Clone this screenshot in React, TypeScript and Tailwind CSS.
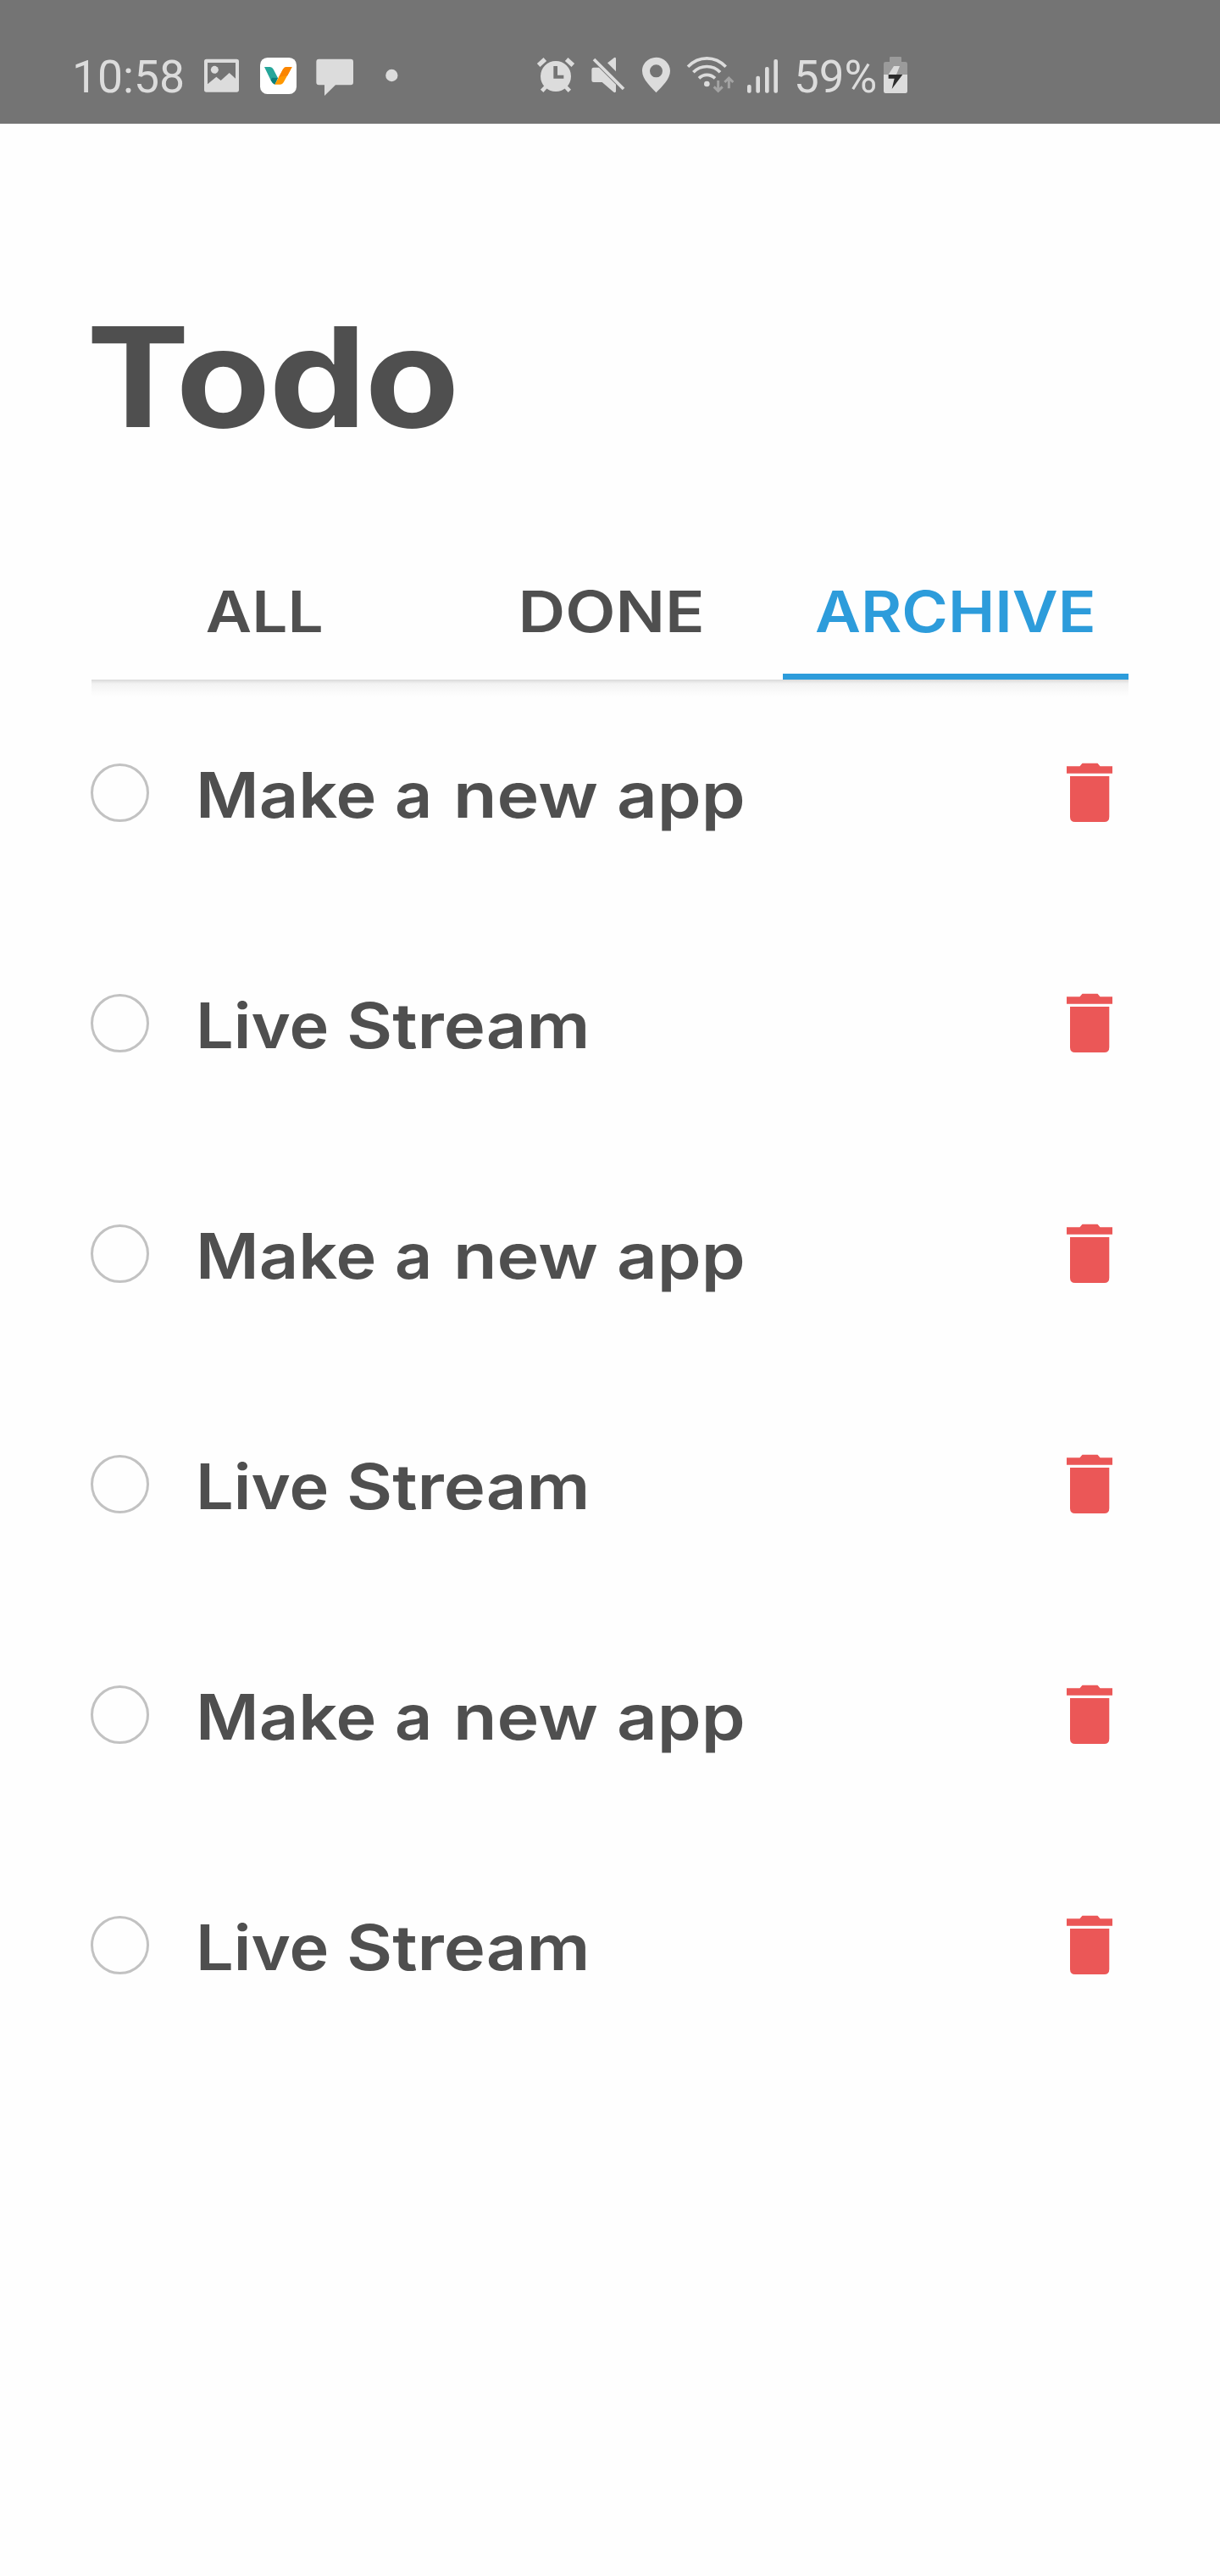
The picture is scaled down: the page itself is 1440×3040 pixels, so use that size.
import type { ReactNode } from 'react'

function Glyph({ box, className, children }: { box: string; className: string; children: ReactNode }) {
  return (
    <svg viewBox={box} className={`h-[50px] shrink-0 ${className}`} fill="#dcdcdc">
      {children}
    </svg>
  )
}

function StatusBar() {
  return (
    <header className="flex h-[146px] items-center bg-[#747474] pt-9 pl-[85px] font-['Roboto',sans-serif] text-[54px] leading-none text-[#dcdcdc]">
      <span className="w-[156px] origin-left scale-x-99">10:58</span>
      <Glyph box="543 78 123 150" className="w-[41px]">
        <path
          fillRule="evenodd"
          d="M551 89H658Q666 89 666 97V198Q666 206 658 206H551Q543 206 543 198V97Q543 89 551 89ZM555 102V178L586 152L602 165L632 138L654 158V102Z"
        />
        <circle cx="580" cy="127" r="13.5" />
      </Glyph>
      <Glyph box="741 78 129 150" className="ml-[25px] w-[43px]">
        <rect x="741" y="84" width="129" height="129" rx="26" fill="#fff" />
        <path d="M756 117H776Q784 117 788 125L804 156L793 179Q784 174 779 164Z" fill="#26a69a" />
        <path d="M783 155L804 156L793 179Q784 174 779 164Z" fill="#0b7f7b" />
        <path d="M854 117H834Q826 117 822 125L793 179H813Q820 179 824 172Z" fill="#ff9800" />
        <path d="M854 117H834Q826 117 822 125L806 155Q826 148 838 148Z" fill="#fb8500" />
      </Glyph>
      <Glyph box="939 78 132 150" className="ml-[23px] w-[44px]">
        <path d="M949 89H1062Q1071 89 1071 98V172Q1071 181 1062 181H1008L969 219V181H949Q940 181 940 172V98Q940 89 949 89Z" />
      </Glyph>
      <Glyph box="1184 78 45 150" className="ml-[38px] w-[15px]">
        <circle cx="1206" cy="147" r="21.5" />
      </Glyph>
      <Glyph box="69 78 138 150" className="ml-[163px] w-[46px]">
        <path fillRule="evenodd" d="M138 96a54 54 0 1 1 0 108a54 54 0 1 1 0-108ZM130 114V158H166V146H144V114Z" />
        <path
          d="M77 111L100 90M176 90L199 111"
          stroke="#dcdcdc"
          strokeWidth="16"
          fill="none"
        />
        <path d="M89 202L104 186M187 202L172 186" stroke="#dcdcdc" strokeWidth="14" fill="none" />
      </Glyph>
      <Glyph box="264 78 120 150" className="ml-[19px] w-[40px]">
        <path d="M273 90L378 195" stroke="#dcdcdc" strokeWidth="11" fill="none" />
        <path d="M321 103L345 84Q351 81 351 88V133Z" />
        <path d="M272 119H291L351 179V203Q350 210 343 206L302 171H272Q265 171 265 164V126Q265 119 272 119Z" />
      </Glyph>
      <Glyph box="444 78 99 150" className="ml-5 w-[33px]">
        <path
          fillRule="evenodd"
          d="M493.500 83C521 83 543 105 543 131C543 160 514 186 493.500 208C473 186 444 160 444 131C444 105 466 83 493.500 83ZM493.500 109a22.500 22.500 0 1 0 0 45a22.500 22.500 0 1 0 0-45Z"
        />
      </Glyph>
      <Glyph box="600 78 171 150" className="ml-[19px] w-[57px]">
        <g fill="none" stroke="#dcdcdc" strokeWidth="11">
          <path d="M606 116Q635 86.500 673 86.500T740 116" />
          <path d="M625 136Q645 115.500 673 115.500T720 136" />
          <path d="M645 157Q657 145 673 145T702 157" />
        </g>
        <circle cx="673" cy="177" r="10" />
        <g fill="none" stroke="#a3a3a3" strokeWidth="9">
          <path d="M713 165V203M698 187L713 202L728 187" />
          <path d="M751 193V156M736 171L751 156L766 171" />
        </g>
      </Glyph>
      <Glyph box="813 78 114 150" className="ml-3.5 w-[38px]">
        <rect x="816" y="180" width="14" height="29" rx="6" />
        <rect x="847" y="149" width="14" height="60" rx="6" />
        <rect x="879" y="117" width="14" height="92" rx="6" />
        <rect x="910" y="90" width="14" height="119" rx="6" />
      </Glyph>
      <span className="ml-[18px] w-[106px] origin-left scale-x-98">59%</span>
      <Glyph box="1299 78 84 150" className="w-7">
        <path d="M1323 81H1359Q1362 81 1362 84V99H1376Q1383 99 1383 106V144H1299V106Q1299 99 1306 99H1320V84Q1320 81 1323 81Z" fill="#9b9b9b" />
        <path d="M1299 144H1383V203Q1383 210 1376 210H1306Q1299 210 1299 203Z" />
        <path d="M1335 114H1356L1344 144H1316Z" />
        <path d="M1316 144H1366L1328 195L1337 158H1316Z" fill="#2c2c2c" />
      </Glyph>
    </header>
  )
}

const tabs = [
  { label: 'ALL', fit: 'scale-x-[1.115]', active: false },
  { label: 'DONE', fit: 'scale-x-[1.151] translate-x-[2px]', active: false },
  { label: 'ARCHIVE', fit: 'scale-x-[1.107]', active: true },
]

function Tabs() {
  return (
    <nav className="h-[162px]">
      <div className="flex h-full text-[67px] leading-none font-semibold">
        {tabs.map((tab) => (
          <button
            key={tab.label}
            className={
              tab.active
                ? 'flex flex-1 items-center justify-center border-b-7 border-[#2d9cdb] pt-[8px] text-[#2d9cdb]'
                : 'flex flex-1 items-center justify-center border-b-7 border-transparent pt-[8px]'
            }
          >
            <span className={tab.fit}>{tab.label}</span>
          </button>
        ))}
      </div>
      <div className="h-5 bg-linear-to-b from-[#d9d9d9] via-[#f3f3f3] via-25% to-[#fefefe]" />
    </nav>
  )
}

const makeApp = [
  { text: 'Make', fit: 'w-[235px] scale-x-[1.095]' },
  { text: 'a', fit: 'w-[69px] scale-x-[1.04]' },
  { text: 'new', fit: 'w-[193px] scale-x-[1.14]' },
  { text: 'app', fit: 'w-[150px] scale-x-[1.125]' },
]

const liveStream = [
  { text: 'Live', fit: 'w-[178px] scale-x-[1.07]' },
  { text: 'Stream', fit: 'w-[290px] scale-x-[1.125]' },
]

const todos = [makeApp, liveStream, makeApp, liveStream, makeApp, liveStream]

function TodoRow({ words }: { words: typeof makeApp }) {
  return (
    <li className="flex h-[272px] items-center">
      <span className="size-[69px] shrink-0 rounded-full border-3 border-[#c2c2c2]" />
      <p className="ml-[55px] flex grow pt-[6px] text-[74px] leading-none font-semibold whitespace-nowrap">
        {words.map((word) => (
          <span key={word.text} className={`origin-left ${word.fit}`}>
            {word.text}
          </span>
        ))}
      </p>
      <svg viewBox="0 0 54 70" className="mr-[19px] h-[70px] w-[54px] shrink-0" fill="#eb5757">
        <path d="M15.500 4.300L18.500 .7H36.500L39.500 4.300H54V12.700H0V4.300Z" />
        <path d="M4 16H50.300V64Q50.300 70 44.300 70H10Q4 70 4 64Z" />
      </svg>
    </li>
  )
}

export default function App() {
  return (
    <div className="h-[3040px] w-[1440px] bg-[#fefefe] font-['Inter',sans-serif] text-[#4f4f4f]">
      <StatusBar />
      <main className="px-[108px]">
        <h1 className="h-[494px] pt-[199px] text-[163px] leading-[200px] font-bold">
          <span className="-ml-[6px] inline-block origin-left scale-x-112 tracking-[-1.8px]">Todo</span>
        </h1>
        <Tabs />
        <ul className="-mt-[3px] -ml-px">
          {todos.map((words, i) => (
            <TodoRow key={i} words={words} />
          ))}
        </ul>
      </main>
    </div>
  )
}
